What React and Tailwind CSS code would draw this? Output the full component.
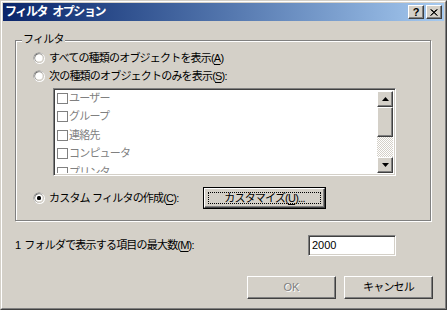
import React from 'react'

const FONT = { fontFamily: '"Liberation Sans", "Noto Sans CJK JP", sans-serif' }

function Radio({ checked }) {
  return (
    <svg width="12" height="12" viewBox="0 0 12 12" className="shrink-0">
      <circle cx="6" cy="6" r="5.5" fill="#808080" />
      <circle cx="6.5" cy="6.5" r="5.5" fill="#ffffff" />
      <circle cx="6" cy="6" r="4.5" fill="#404040" />
      <circle cx="6.5" cy="6.5" r="4.5" fill="#d4d0c8" />
      <circle cx="6" cy="6" r="3.6" fill="#ffffff" />
      {checked && <rect x="4" y="4" width="4" height="4" rx="1.5" fill="#000000" />}
    </svg>
  )
}

function U({ children }) {
  return <span className="underline underline-offset-2">{children}</span>
}

function Arrow({ up }) {
  return (
    <svg width="7" height="4" viewBox="0 0 7 4">
      <path d={up ? 'M3.5 0 L7 4 L0 4 Z' : 'M0 0 L7 0 L3.5 4 Z'} fill="#000" />
    </svg>
  )
}

const raised = 'border border-t-white border-l-white border-r-[#404040] border-b-[#404040] shadow-[inset_-1px_-1px_0_#808080]'
const sunken = 'border border-t-[#808080] border-l-[#808080] border-r-white border-b-white shadow-[inset_1px_1px_0_#404040,inset_-1px_-1px_0_#d4d0c8]'

const items = ['ユーザー', 'グループ', '連絡先', 'コンピュータ', 'プリンタ']

export default function App() {
  return (
    <div style={FONT} className="w-[447px] h-[310px] bg-[#d4d0c8] text-[11px] leading-none text-black tracking-[-0.8px] border border-t-[#d4d0c8] border-l-[#d4d0c8] border-r-[#404040] border-b-[#404040] select-none">
      <div className="h-full border border-t-white border-l-white border-r-[#808080] border-b-[#808080] p-px flex flex-col">
        {/* title bar */}
        <div className="h-[18px] shrink-0 flex items-center bg-gradient-to-r from-[#0a246a] to-[#a6caf0] pl-[2px] pr-[2px]">
          <span className="text-white font-bold text-[12px] tracking-[-1.4px] flex gap-[5px]">
            <span>フィルタ</span>
            <span>オプション</span>
          </span>
          <div className="ml-auto flex items-center">
            <div className={`w-[16px] h-[14px] bg-[#d4d0c8] flex items-center justify-center ${raised}`}>
              <span className="font-bold text-[11px] tracking-normal leading-none" style={{ fontFamily: '"Liberation Sans", sans-serif' }}>?</span>
            </div>
            <div className={`w-[16px] h-[14px] ml-[2px] bg-[#d4d0c8] flex items-center justify-center ${raised}`}>
              <svg width="8" height="7" viewBox="0 0 8 7">
                <path d="M0.5 0.5 L7.5 6.5 M1.5 0.5 L7 6.5 M7.5 0.5 L0.5 6.5 M6.5 0.5 L1 6.5" stroke="#000" strokeWidth="1" />
              </svg>
            </div>
          </div>
        </div>

        {/* body */}
        <div className="flex flex-col pl-[12px]">
          {/* group box */}
          <div className="relative mt-[19px] w-[416px] h-[181px] border border-[#808080] shadow-[inset_1px_1px_0_white,1px_1px_0_white] flex flex-col">
            <span className="absolute -top-[7px] left-[6px] bg-[#d4d0c8] px-px">フィルタ</span>
            <div className="mt-[9px] ml-[17px] h-[16px] flex items-center gap-[4px]">
              <Radio />
              <span>すべての種類のオブジェクトを表示(<U>A</U>)</span>
            </div>
            <div className="mt-[2px] ml-[17px] h-[16px] flex items-center gap-[4px]">
              <Radio />
              <span>次の種類のオブジェクトのみを表示(<U>S</U>):</span>
            </div>
            <div className={`mt-[4px] ml-[37px] w-[343px] h-[88px] bg-white flex p-[2px] ${sunken}`}>
              <div className="flex-1 overflow-hidden pl-[1px] text-[#808080]">
                <div className="-mt-[2px]">
                  {items.map(t => (
                    <div key={t} className="h-[18.5px] flex items-center">
                      <span className="w-[11px] h-[11px] border border-[#808080] shrink-0 mr-px" />
                      <span>{t}</span>
                    </div>
                  ))}
                </div>
              </div>
              <div className="w-[16px] flex flex-col">
                <div className={`h-[16px] bg-[#d4d0c8] flex items-center justify-center ${raised}`}><Arrow up /></div>
                <div className={`h-[30px] bg-[#d4d0c8] ${raised}`} />
                <div className="flex-1 bg-[repeating-conic-gradient(#ffffff_0_25%,#d4d0c8_0_50%)] bg-[length:2px_2px]" />
                <div className={`h-[16px] bg-[#d4d0c8] flex items-center justify-center ${raised}`}><Arrow /></div>
              </div>
            </div>
            <div className="mt-[11px] ml-[17px] h-[22px] flex items-center">
              <Radio checked />
              <span className="ml-[4px]">カスタム フィルタの作成(<U>C</U>):</span>
              <div className="ml-auto mr-[104px] w-[123px] h-[22px] border border-black">
                <div className={`h-full bg-[#d4d0c8] p-[3px] ${raised}`}>
                  <div className="h-full border border-dotted border-black flex items-center justify-center">
                    カスタマイズ(<U>U</U>)...
                  </div>
                </div>
              </div>
            </div>
          </div>

          {/* max items */}
          <div className="mt-[14px] h-[21px] flex items-center">
            <span className="flex gap-[4px]">
              <span>1</span>
              <span>フォルダで表示する項目の最大数(<U>M</U>):</span>
            </span>
            <div className={`ml-auto mr-[48px] w-[88px] h-[21px] bg-white flex items-center pl-[3px] tracking-normal ${sunken}`}>2000</div>
          </div>

          {/* buttons */}
          <div className="mt-[20px] flex justify-end gap-[8px] mr-[11px]">
            <div className={`w-[89px] h-[23px] bg-[#d4d0c8] flex items-center justify-center text-[#808080] tracking-normal ${raised}`}>
              <span className="[text-shadow:1px_1px_0_white]">OK</span>
            </div>
            <div className={`w-[89px] h-[23px] bg-[#d4d0c8] flex items-center justify-center ${raised}`}>キャンセル</div>
          </div>
        </div>
      </div>
    </div>
  )
}
